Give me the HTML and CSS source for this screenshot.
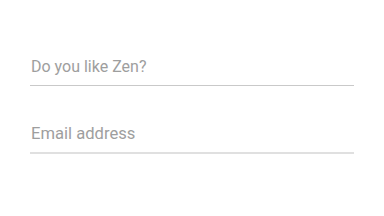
FILE: index.html
```html
<!DOCTYPE html>
<html lang="en">
<head>
    <meta charset="UTF-8">
    <meta name="viewport" content="width=device-width, initial-scale=1.0">
    <title>Zen</title>
    <link rel="stylesheet" href="styles.css">
</head>
<body>
    <form class="zen-form">
        <input class="field-input" type="text" placeholder="Do you like Zen?">
        <input class="field-input field-input-email" type="email" placeholder="Email address">
    </form>
</body>
</html>
```

FILE: styles.css
```css
* {
    box-sizing: border-box;
    margin: 0;
    padding: 0;
    font-family: Roboto, 'Noto Sans', sans-serif;
}

body {
    background-color: #ffffff;
}

.zen-form {
    display: flex;
    flex-direction: column;
    gap: 37px;
    padding: 56px 30px 0 30px;
}

.field-input {
    width: 100%;
    border: none;
    border-bottom: 1px solid #c9c9c9;
    outline: none;
    background: none;
    font-size: 16px;
    line-height: 20px;
    height: 30px;
    padding: 0 0 9px 1px;
    color: #555;
}

.field-input::placeholder {
    color: #9e9e9e;
}

.field-input-email {
    font-size: 16.6px;
    height: 31px;
    border-bottom: 2px solid #e0e0e0;
}
```
